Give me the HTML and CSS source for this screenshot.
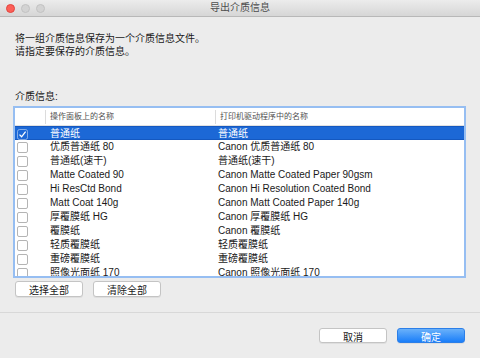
FILE: index.html
```html
<!DOCTYPE html>
<html lang="zh-CN">

<head>
    <meta charset="utf-8">
    <title>导出介质信息</title>
    <link rel="stylesheet" href="styles.css">
</head>

<body>
    <div class="window">
        <header class="titlebar">
            <div class="lights">
                <span class="light close"></span>
                <span class="light"></span>
                <span class="light"></span>
            </div>
            <h1 class="title">导出介质信息</h1>
            <div></div>
        </header>

        <main class="content">
            <p class="intro">将一组介质信息保存为一个介质信息文件。<br>请指定要保存的介质信息。</p>
            <p class="label">介质信息:</p>

            <div class="list">
                <div class="list-head">
                    <span></span>
                    <span class="head-cell">操作面板上的名称</span>
                    <span class="head-cell">打印机驱动程序中的名称</span>
                </div>
                <div class="rows">
                    <div class="row selected">
                        <span class="check">
                            <svg width="11" height="11" viewBox="0 0 11 11">
                                <rect x="0.5" y="0.5" width="10" height="10" rx="2" fill="none" stroke="rgba(255,255,255,0.45)"/>
                                <path d="M2.5 5.6 L4.6 7.8 L8.6 2.6" fill="none" stroke="#fff" stroke-width="1.3"/>
                            </svg>
                        </span>
                        <span class="cell">普通纸</span>
                        <span class="cell">普通纸</span>
                    </div>
                    <div class="row"><span class="check"><i class="box"></i></span><span class="cell">优质普通纸 80</span><span class="cell">Canon 优质普通纸 80</span></div>
                    <div class="row"><span class="check"><i class="box"></i></span><span class="cell">普通纸(速干)</span><span class="cell">普通纸(速干)</span></div>
                    <div class="row"><span class="check"><i class="box"></i></span><span class="cell">Matte Coated 90</span><span class="cell">Canon Matte Coated Paper 90gsm</span></div>
                    <div class="row"><span class="check"><i class="box"></i></span><span class="cell">Hi ResCtd Bond</span><span class="cell">Canon Hi Resolution Coated Bond</span></div>
                    <div class="row"><span class="check"><i class="box"></i></span><span class="cell">Matt Coat 140g</span><span class="cell">Canon Matt Coated Paper 140g</span></div>
                    <div class="row"><span class="check"><i class="box"></i></span><span class="cell">厚覆膜纸 HG</span><span class="cell">Canon 厚覆膜纸 HG</span></div>
                    <div class="row"><span class="check"><i class="box"></i></span><span class="cell">覆膜纸</span><span class="cell">Canon 覆膜纸</span></div>
                    <div class="row"><span class="check"><i class="box"></i></span><span class="cell">轻质覆膜纸</span><span class="cell">轻质覆膜纸</span></div>
                    <div class="row"><span class="check"><i class="box"></i></span><span class="cell">重磅覆膜纸</span><span class="cell">重磅覆膜纸</span></div>
                    <div class="row"><span class="check"><i class="box"></i></span><span class="cell">照像光面纸 170</span><span class="cell">Canon 照像光面纸 170</span></div>
                </div>
            </div>

            <div class="list-buttons">
                <button class="btn">选择全部</button>
                <button class="btn">清除全部</button>
            </div>
        </main>

        <footer class="footer">
            <button class="btn">取消</button>
            <button class="btn primary">确定</button>
        </footer>
    </div>
</body></html>
```

FILE: styles.css
```css
* {
    margin: 0;
    box-sizing: border-box;
}

body {
    background-color: #ececec;
    font-family: "Liberation Sans", "Noto Sans CJK SC", sans-serif;
    font-size: 10px;
    color: #1a1a1a;
}

.window {
    width: 480px;
    height: 358px;
    overflow: hidden;
}

.titlebar {
    height: 17px;
    display: grid;
    grid-template-columns: 1fr auto 1fr;
    align-items: center;
    background: linear-gradient(#ececec, #d6d6d6);
    border-bottom: 1px solid #b8b8b8;
}

.lights {
    display: flex;
    gap: 6px;
    padding-left: 6px;
}

.light {
    width: 9px;
    height: 9px;
    border-radius: 50%;
    background-color: #d3d3d3;
    border: 1px solid #c2c2c2;
}

.light.close {
    background-color: #fc5f57;
    border-color: #e2453f;
}

.title {
    font-size: 10px;
    font-weight: normal;
    color: #4d4d4d;
    line-height: 16px;
}

.content {
    padding: 0 14px 0 13px;
}

.intro {
    margin-top: 16px;
    padding-left: 2px;
    line-height: 12.5px;
}

.label {
    margin-top: 33px;
    padding-left: 2px;
    line-height: 12px;
}

.list {
    margin-top: 3px;
    border: 2px solid #96bef2;
    background-color: #fff;
}

.list-head {
    display: grid;
    grid-template-columns: 30px 170px 1fr;
    height: 18px;
    align-items: center;
    border-bottom: 1px solid #e2e2e2;
}

.head-cell {
    font-size: 8px;
    color: #505050;
    line-height: 14px;
    border-left: 1px solid #dcdcdc;
    padding-left: 4px;
}

.rows {
    height: 150px;
    overflow: hidden;
}

.row {
    display: grid;
    grid-template-columns: 30px 170px 1fr;
    height: 14px;
    align-items: center;
    line-height: 14px;
}

.row.selected {
    background-color: #1c68d6;
    border-top: 1px solid #1458c0;
    border-bottom: 1px solid #1458c0;
    color: #fff;
}

.cell {
    padding-left: 5px;
    white-space: nowrap;
}

.cell + .cell {
    padding-left: 3px;
}

.check {
    display: flex;
    padding-left: 2px;
}

.box {
    width: 11px;
    height: 11px;
    border: 1px solid #b4b4b4;
    border-radius: 2px;
    background-color: #fff;
}

.list-buttons {
    display: flex;
    gap: 10px;
    margin-top: 3px;
    padding-left: 2px;
}

.btn {
    width: 68px;
    height: 16px;
    padding: 0;
    font-family: inherit;
    font-size: 10px;
    color: #1a1a1a;
    background-color: #fff;
    border: 1px solid #c4c4c4;
    border-radius: 3px;
    box-shadow: 0 1px 0 rgba(0, 0, 0, 0.06);
}

.footer {
    margin-top: 15px;
    border-top: 1px solid #d8d8d8;
    padding: 15px 15px 0 0;
    display: flex;
    justify-content: flex-end;
    gap: 10px;
}

.footer .btn {
    height: 15px;
}

.btn.primary {
    color: #fff;
    background: linear-gradient(#6ab1fa, #1a7ef9);
    border-color: #2c7fe8;
}
```
